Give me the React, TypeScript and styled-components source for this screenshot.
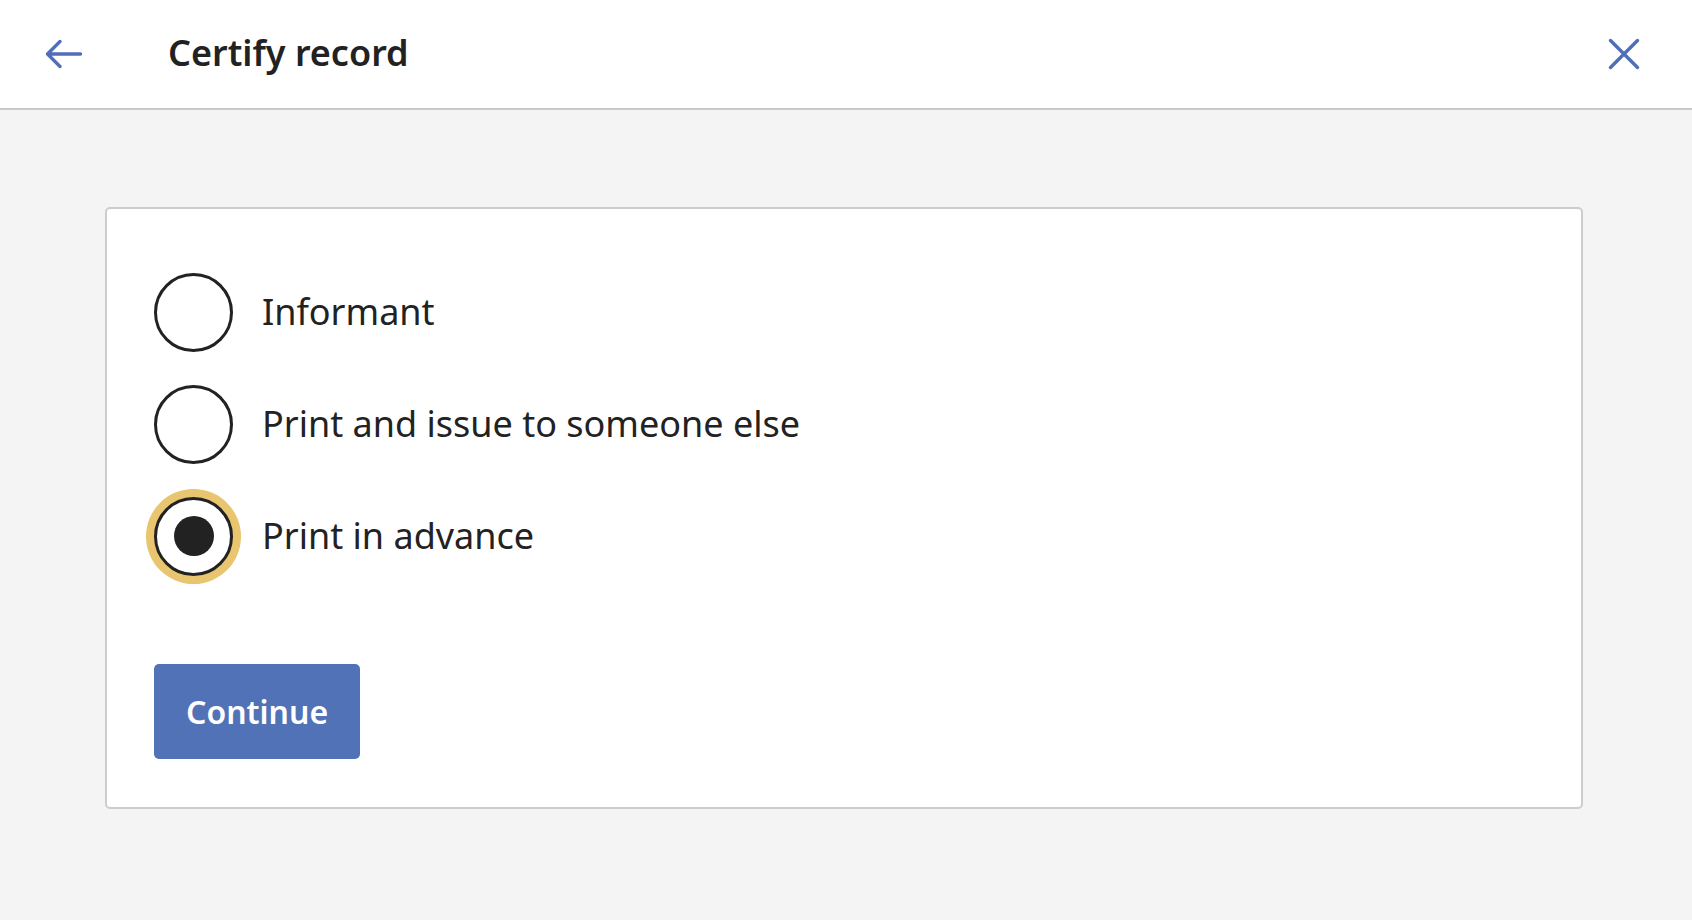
import React, { useState } from "react";
import styled, { createGlobalStyle } from "styled-components";

const GlobalStyle = createGlobalStyle`
  html, body {
    margin: 0;
    padding: 0;
    background: #f4f4f4;
    font-family: "Noto Sans", "Open Sans", sans-serif;
    color: #222222;
  }
  * { box-sizing: border-box; }
`;

const Page = styled.div`
  min-height: 920px;
  background: #f4f4f4;
  display: flex;
  flex-direction: column;
`;

const TopBar = styled.header`
  height: 110px;
  background: #ffffff;
  border-bottom: 2px solid #c9c9c9;
  display: flex;
  align-items: center;
  padding: 0 50px 0 44px;
`;

const IconButton = styled.button`
  background: transparent;
  border: none;
  padding: 0;
  margin: 0;
  display: flex;
  align-items: center;
  justify-content: center;
  cursor: pointer;
  color: #4f6fb8;
`;

const Title = styled.h1`
  margin: 0 0 2px 84px;
  font-size: 36px;
  font-weight: 600;
  color: #222222;
  flex: 1;
  line-height: 1.36;
`;

const Body = styled.main`
  padding: 97px 109px 0 105px;
`;

const Card = styled.section`
  background: #ffffff;
  border: 2px solid #cccccc;
  border-radius: 5px;
  padding: 47px 47px 48px 47px;
  display: flex;
  flex-direction: column;
  align-items: flex-start;
`;

const OptionList = styled.div`
  display: flex;
  flex-direction: column;
  margin-bottom: 72px;
`;

const OptionRow = styled.label`
  height: 112px;
  display: flex;
  align-items: center;
  cursor: pointer;
`;

const RadioCircle = styled.span<{ $checked: boolean }>`
  position: relative;
  width: 79px;
  height: 79px;
  border-radius: 50%;
  border: 3px solid #222222;
  background: #ffffff;
  display: flex;
  align-items: center;
  justify-content: center;
  flex-shrink: 0;
  box-shadow: ${(p) => (p.$checked ? "0 0 0 8px #e8c56e" : "none")};
`;

const RadioDot = styled.span`
  width: 40px;
  height: 40px;
  border-radius: 50%;
  background: #222222;
`;

const OptionLabel = styled.span`
  margin-left: 29px;
  font-size: 36px;
  line-height: 1.36;
  color: #222222;
`;

const HiddenInput = styled.input`
  position: absolute;
  opacity: 0;
  width: 0;
  height: 0;
`;

const PrimaryButton = styled.button`
  height: 95px;
  padding: 0 32px;
  background: #5172b7;
  color: #ffffff;
  border: none;
  border-radius: 5px;
  font-family: "Noto Sans", "Open Sans", sans-serif;
  font-size: 32px;
  font-weight: 600;
  cursor: pointer;
`;

const options = [
  { id: "informant", label: "Informant" },
  { id: "someone", label: "Print and issue to someone else" },
  { id: "advance", label: "Print in advance" },
];

export default function App() {
  const [selected, setSelected] = useState("advance");
  return (
    <Page>
      <GlobalStyle />
      <TopBar>
        <IconButton aria-label="Back">
          <svg width="40" height="32" viewBox="0 0 40 32" fill="none">
            <path
              d="M36.5 16H3.5M3.5 16L16 3.5M3.5 16L16 28.5"
              stroke="currentColor"
              strokeWidth="3.4"
              strokeLinecap="round"
              strokeLinejoin="round"
            />
          </svg>
        </IconButton>
        <Title>Certify record</Title>
        <IconButton aria-label="Close">
          <svg width="36" height="36" viewBox="0 0 36 36" fill="none">
            <path
              d="M4.5 4.5L31.5 31.5M31.5 4.5L4.5 31.5"
              stroke="currentColor"
              strokeWidth="3.4"
              strokeLinecap="round"
            />
          </svg>
        </IconButton>
      </TopBar>
      <Body>
        <Card>
          <OptionList>
            {options.map((o) => (
              <OptionRow key={o.id}>
                <HiddenInput
                  type="radio"
                  name="certify"
                  checked={selected === o.id}
                  onChange={() => setSelected(o.id)}
                />
                <RadioCircle $checked={selected === o.id}>
                  {selected === o.id && <RadioDot />}
                </RadioCircle>
                <OptionLabel>{o.label}</OptionLabel>
              </OptionRow>
            ))}
          </OptionList>
          <PrimaryButton>Continue</PrimaryButton>
        </Card>
      </Body>
    </Page>
  );
}
